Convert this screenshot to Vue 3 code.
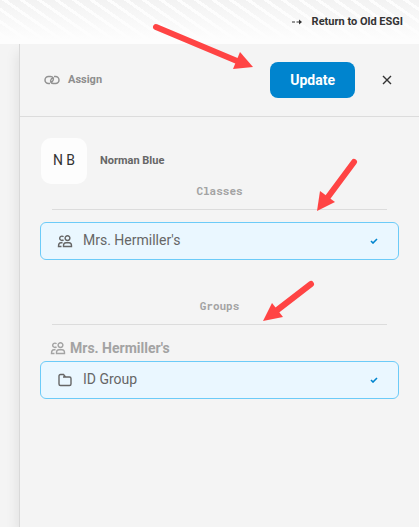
<template>
  <div class="page">
    <header class="topbar">
      <a class="return-link" href="#">
        <svg class="dash-arrow" viewBox="0 0 12 8" aria-hidden="true">
          <path d="M1 4h3M5.500 4h3" />
          <path class="head" d="M8 1.500L11 4L8 6.500Z" />
        </svg>
        Return to Old ESGI
      </a>
    </header>

    <main class="panel">
      <div class="panel-head">
        <svg class="link-icon" viewBox="0 0 16 10" aria-hidden="true">
          <path
            d="M6 8.500H4.500a3.500 3.500 0 0 1 0-7H6.500C9 1.500 10 3.500 9 5.500Q8.500 6.700 7.300 7M10 1.500h1.500a3.500 3.500 0 0 1 0 7H9.500C7 8.500 6 6.500 7 4.500Q7.500 3.300 8.700 3"
          />
        </svg>
        <h1 class="title">Assign</h1>
        <button class="update" type="button">Update</button>
        <button class="close" type="button" aria-label="Close">
          <svg viewBox="0 0 10 10" aria-hidden="true">
            <path d="M1 1l8 8M9 1l-8 8" />
          </svg>
        </button>
      </div>

      <div class="panel-body">
        <div class="student">
          <span class="avatar">N B</span>
          <span class="name">Norman Blue</span>
        </div>

        <section v-for="section in sections" :key="section.title" class="section">
          <h2 class="section-title">{{ section.title }}</h2>
          <h3 v-if="section.owner" class="owner">
            <svg class="icon" viewBox="0 0 16 14" aria-hidden="true">
              <path :d="icons.people" />
            </svg>
            {{ section.owner }}
          </h3>
          <label
            v-for="item in section.items"
            :key="item.label"
            class="item"
            :class="{ selected: item.selected }"
          >
            <svg class="icon" viewBox="0 0 16 14" aria-hidden="true">
              <path :d="icons[item.icon]" />
            </svg>
            <span class="item-label">{{ item.label }}</span>
            <span class="check">
              <input v-model="item.selected" type="checkbox" />
              <svg v-if="item.selected" viewBox="0 0 8 6" aria-hidden="true">
                <path d="M1 3l2 2l4-4" />
              </svg>
            </span>
          </label>
        </section>
      </div>
    </main>

    <svg class="arrows" viewBox="0 0 419 527" aria-hidden="true">
      <g v-for="arrow in arrows" :key="arrow.head">
        <path class="shaft" :d="arrow.shaft" />
        <path class="tip" :d="arrow.head" />
      </g>
    </svg>
  </div>
</template>

<script setup>
import { ref } from "vue";

const icons = {
  people:
    "M6.500 2.800A2.200 2.200 0 1 0 6.500 5.800M10.500 1.700a2.400 2.400 0 1 1 0 4.800a2.400 2.400 0 1 1 0-4.800M5.500 8.700H4C2.200 8.700 1.500 10 1.500 12.500H4.500M6.500 12.500V11.500C6.500 9.500 7.500 8.700 9 8.700h3c1.500 0 2.500 .8 2.500 2.800v1Z",
  folder:
    "M2 11V3Q2 1.500 3.500 1.500H6.500L8.500 4H12.500Q14 4 14 5.500V11Q14 12.500 12.500 12.500H3.500Q2 12.500 2 11ZM8.500 4H6",
};

const sections = ref([
  {
    title: "Classes",
    items: [{ label: "Mrs. Hermiller's", icon: "people", selected: true }],
  },
  {
    title: "Groups",
    owner: "Mrs. Hermiller's",
    items: [{ label: "ID Group", icon: "folder", selected: true }],
  },
]);

const arrows = [
  { shaft: "M156 27L237 61", head: "M253 67L233 69L240 52Z" },
  { shaft: "M354 162L328 197", head: "M317 211L320 191L335 202Z" },
  { shaft: "M311 284L276 311", head: "M263 321L272 303L283 317Z" },
];
</script>

<style>
body {
  margin: 0;
  background: #f4f4f4;
}
</style>

<style scoped>
.page {
  position: relative;
  display: flex;
  flex-direction: column;
  min-height: 100vh;
  font-family: Roboto, "Liberation Sans", sans-serif;
  color: #666;
}
.topbar {
  display: flex;
  align-items: center;
  justify-content: flex-end;
  height: 44px;
  padding: 0 16px;
  box-sizing: border-box;
  background:
    linear-gradient(rgba(253, 253, 253, 0), #fdfdfd 90%),
    repeating-linear-gradient(35deg, #f3f3f3 0 7px, #fdfdfd 7px 10px);
}
.return-link {
  display: flex;
  align-items: center;
  gap: 9px;
  color: #333;
  font-size: 11px;
  font-weight: 700;
  line-height: 16px;
  text-decoration: none;
}
.dash-arrow {
  width: 12px;
  height: 8px;
  stroke: #333;
}
.dash-arrow .head {
  fill: #333;
  stroke: none;
}

.panel {
  flex: 1;
  margin-left: 19px;
  border-left: 1px solid #d9d9d9;
  background: #f4f4f4;
  box-shadow: -2px 8px 12px rgba(0, 0, 0, 0.08);
  clip-path: inset(0 0 0 -19px);
}
.panel-head {
  display: flex;
  align-items: center;
  height: 72px;
  padding: 0 24px;
  border-bottom: 1px solid #dcdcdc;
}
.link-icon {
  width: 16px;
  height: 10px;
  margin-right: 8px;
  fill: none;
  stroke: #929292;
  stroke-width: 1.5;
}
.title {
  margin: 0;
  color: #8e8e8e;
  font-size: 11px;
  font-weight: 700;
  line-height: 16px;
}
.update {
  height: 36px;
  margin-left: auto;
  padding: 0 20px;
  border: none;
  border-radius: 8px;
  background: #0084ce;
  color: #fff;
  font-family: inherit;
  font-size: 14px;
  font-weight: 700;
  cursor: pointer;
}
.close {
  display: flex;
  align-items: center;
  justify-content: center;
  width: 16px;
  height: 16px;
  margin-left: 24px;
  padding: 0;
  border: none;
  background: none;
  cursor: pointer;
}
.close svg {
  width: 10px;
  height: 10px;
  fill: none;
  stroke: #333;
  stroke-width: 1.4;
}

.panel-body {
  padding: 21px 20px;
}
.student {
  display: flex;
  align-items: center;
  gap: 13px;
  padding-left: 1px;
}
.avatar {
  display: flex;
  align-items: center;
  justify-content: center;
  width: 46px;
  height: 46px;
  padding-bottom: 2px;
  box-sizing: border-box;
  border-radius: 10px;
  background: #fdfdfd;
  color: #333;
  font-size: 14px;
}
.name {
  padding-bottom: 2px;
  font-size: 11px;
  font-weight: 700;
}
.section + .section {
  margin-top: 39px;
}
.section-title {
  margin: 0 12px 12px;
  padding-bottom: 11px;
  border-bottom: 1px solid #dcdcdc;
  color: #a3a3a3;
  font-family: "Roboto Mono", "Liberation Mono", monospace;
  font-size: 11px;
  font-weight: 700;
  line-height: 14px;
  text-align: center;
}
.owner {
  display: flex;
  align-items: center;
  gap: 4px;
  margin: 0 10px 2px;
  color: #a3a3a3;
  font-size: 14px;
  font-weight: 700;
  line-height: 22px;
}
.icon {
  width: 16px;
  height: 14px;
  flex-shrink: 0;
  fill: none;
  stroke: currentColor;
  stroke-width: 1.4;
}
.item {
  display: flex;
  align-items: center;
  gap: 10px;
  height: 36px;
  padding: 0 16px;
  border: 1px solid #dcdcdc;
  border-radius: 6px;
  font-size: 14px;
  cursor: pointer;
}
.item.selected {
  border-color: #6ccbf8;
  background: #eaf7ff;
}
.item-label {
  padding-bottom: 2px;
}
.check {
  display: grid;
  place-items: center;
  width: 16px;
  height: 16px;
  margin-left: auto;
}
.check > * {
  grid-area: 1 / 1;
}
.check input {
  width: 16px;
  height: 16px;
  margin: 0;
  appearance: none;
  cursor: pointer;
}
.check svg {
  width: 8px;
  height: 6px;
  fill: none;
  stroke: #0084ce;
  stroke-width: 1.6;
  pointer-events: none;
}

/* Callouts lie over the page and never catch clicks. */
.arrows {
  position: absolute;
  top: 0;
  left: 0;
  width: 419px;
  height: 527px;
  pointer-events: none;
}
.shaft {
  fill: none;
  stroke: #ff4444;
  stroke-width: 6;
  stroke-linecap: round;
}
.tip {
  fill: #ff4444;
}
</style>
